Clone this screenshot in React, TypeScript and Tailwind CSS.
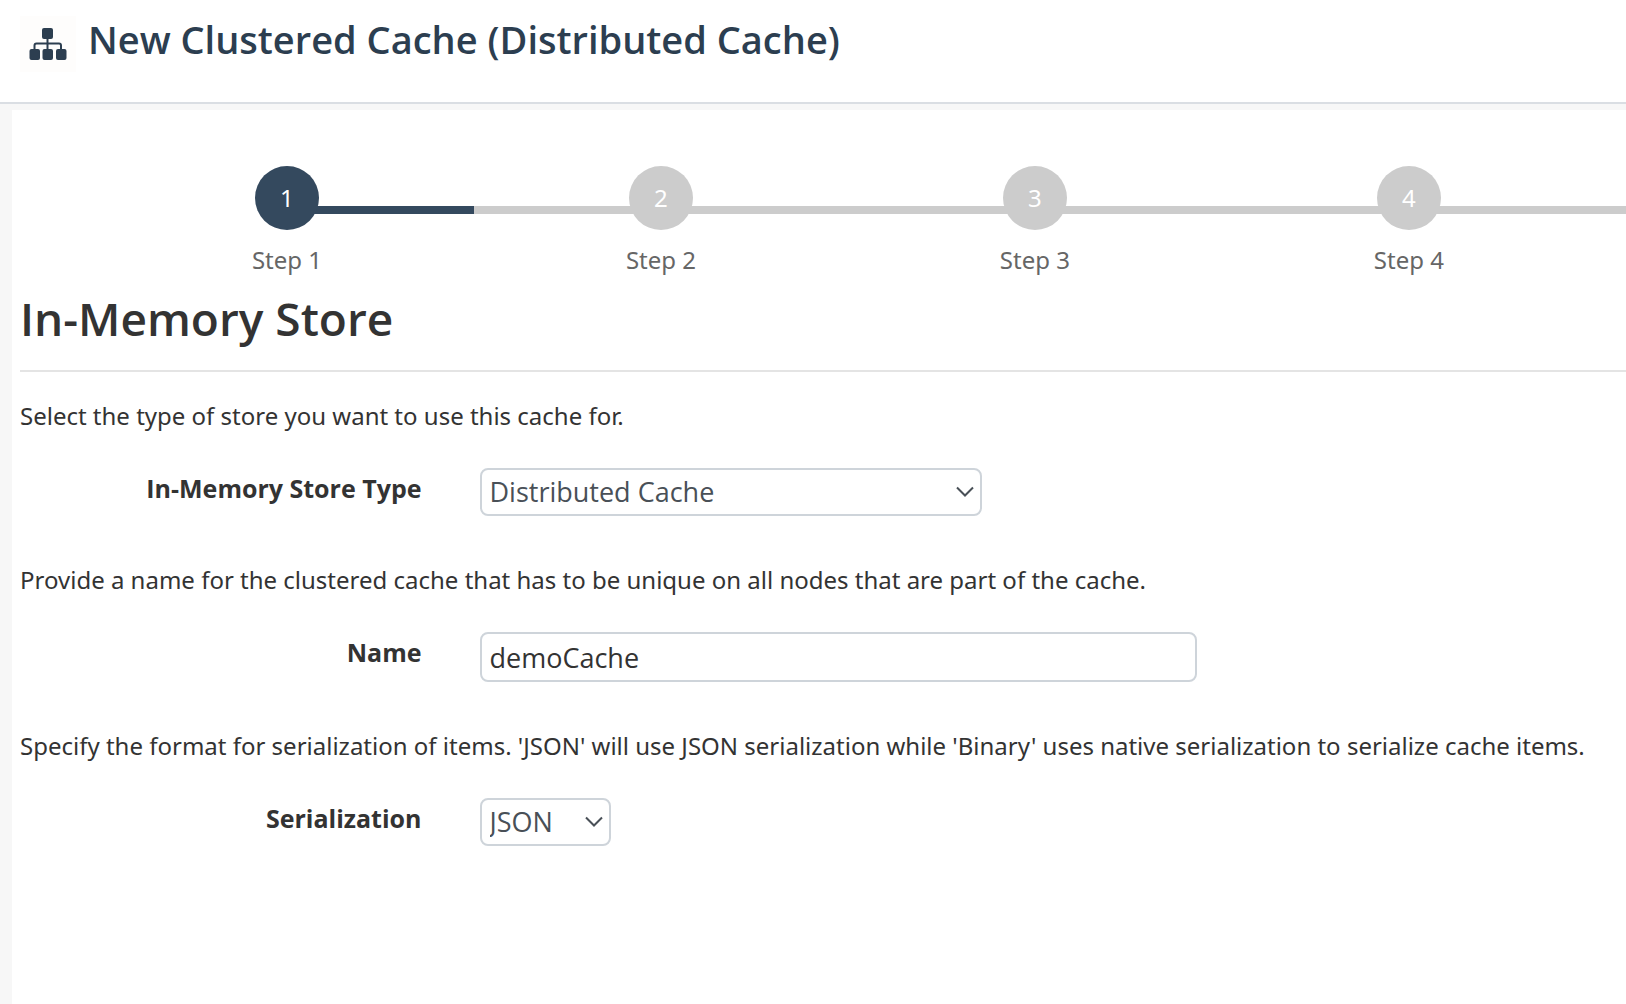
import { useState } from "react";
import type { ReactNode } from "react";

const steps = [1, 2, 3, 4];

const SitemapIcon = () => {
  return (
    <svg viewBox="0 0 38 32" className="h-8 w-[38px]" fill="currentColor" aria-hidden="true">
      <rect x="13" y="0" width="11" height="11" rx="2" />
      <rect x="0.5" y="21" width="10.5" height="11" rx="2" />
      <rect x="13.5" y="21" width="10.5" height="11" rx="2" />
      <rect x="27" y="21" width="10.5" height="11" rx="2" />
      <path
        d="M18.500 10v12M5.500 22v-4.500a2 2 0 0 1 2-2h22.500a2 2 0 0 1 2 2v4.500"
        fill="none"
        stroke="currentColor"
        strokeWidth="2"
      />
    </svg>
  );
};

const Chevron = () => {
  return (
    <svg
      viewBox="0 0 18 11"
      className="pointer-events-none absolute right-2 top-[18px] h-[11px] w-[18px] text-[#495057]"
      fill="none"
      stroke="currentColor"
      strokeWidth="2"
      aria-hidden="true"
    >
      <path d="M1 1.500l8 8 8-8" />
    </svg>
  );
};

const Stepper = ({ current }: { current: number }) => {
  return (
    <ol className="flex overflow-hidden font-['Noto_Sans',sans-serif] text-[24px] leading-9">
      <li className="w-[100px] shrink-0" aria-hidden="true" />
      {steps.map((step) => (
        <li key={step} className="relative flex w-[23%] shrink-0 flex-col items-center">
          {step > 1 && <span className="absolute left-0 top-10 h-2 w-1/2 bg-[#ccc]" />}
          <span
            className={`absolute right-0 top-10 h-2 w-1/2 ${
              step === current ? "bg-[#34495e]" : "bg-[#ccc]"
            }`}
          />
          <span
            className={`relative flex size-16 items-center justify-center rounded-full text-white ${
              step === current ? "bg-[#34495e]" : "bg-[#ccc]"
            }`}
          >
            {step}
          </span>
          <span className="mt-3 text-[#666]">Step {step}</span>
        </li>
      ))}
      <li className="mt-10 h-2 flex-1 bg-[#ccc]" aria-hidden="true" />
    </ol>
  );
};

type FieldProps = {
  id: string;
  label: string;
  hint: string;
  children: ReactNode;
};

const Field = ({ id, label, hint, children }: FieldProps) => {
  return (
    <div>
      <p className="font-['Noto_Sans',sans-serif] text-[24px] leading-10">{hint}</p>
      <div className="mt-8 flex gap-[58px]">
        <label htmlFor={id} className="w-1/4 shrink-0 text-right font-bold leading-10">
          {label}
        </label>
        {children}
      </div>
    </div>
  );
};

export default function App() {
  const [storeType, setStoreType] = useState<string>("Distributed Cache");
  const [name, setName] = useState<string>("demoCache");
  const [serialization, setSerialization] = useState<string>("JSON");

  return (
    <div className="flex min-h-screen flex-col bg-[#f7f7f7] font-['Open_Sans',sans-serif] text-[25px] text-[#333]">
      <header className="flex gap-3 border-b-2 border-[#dadee3] bg-white pb-[30px] pl-5 pt-4 text-[#2c3e50]">
        <span className="flex size-14 items-center justify-center bg-[#fefdfc]">
          <SitemapIcon />
        </span>
        <h1 className="text-[38px] font-semibold leading-[46px]">
          New Clustered Cache (Distributed Cache)
        </h1>
      </header>

      <main className="ml-3 mt-1.5 flex-1 bg-white pt-14">
        <div className="-ml-3">
          <Stepper current={1} />
        </div>

        <div className="pl-2">
          <h2 className="mt-3 border-b-2 border-[#e4e4e4] pb-6 text-[46px] font-semibold leading-14">
            In-Memory Store
          </h2>

          <form className="mt-6 flex flex-col gap-11">
            <Field
              id="store-type"
              label="In-Memory Store Type"
              hint="Select the type of store you want to use this cache for."
            >
              <div className="relative w-[502px]">
                <select
                  id="store-type"
                  value={storeType}
                  onChange={(e) => setStoreType(e.target.value)}
                  className="h-12 w-full appearance-none rounded-lg border-2 border-[#ced4da] bg-white px-2 text-[27px] leading-10 text-[#495057]"
                >
                  <option>Distributed Cache</option>
                </select>
                <Chevron />
              </div>
            </Field>

            <Field
              id="cache-name"
              label="Name"
              hint="Provide a name for the clustered cache that has to be unique on all nodes that are part of the cache."
            >
              <input
                id="cache-name"
                type="text"
                value={name}
                onChange={(e) => setName(e.target.value)}
                className="h-[50px] w-full max-w-[717px] rounded-lg border-2 border-[#ced4da] bg-white px-2 text-[27px] leading-10"
              />
            </Field>

            <Field
              id="serialization"
              label="Serialization"
              hint="Specify the format for serialization of items. 'JSON' will use JSON serialization while 'Binary' uses native serialization to serialize cache items."
            >
              <div className="relative w-[131px]">
                <select
                  id="serialization"
                  value={serialization}
                  onChange={(e) => setSerialization(e.target.value)}
                  className="h-12 w-full appearance-none rounded-lg border-2 border-[#ced4da] bg-white px-2 text-[27px] leading-10 text-[#495057]"
                >
                  <option>JSON</option>
                  <option>Binary</option>
                </select>
                <Chevron />
              </div>
            </Field>
          </form>
        </div>
      </main>
    </div>
  );
}
